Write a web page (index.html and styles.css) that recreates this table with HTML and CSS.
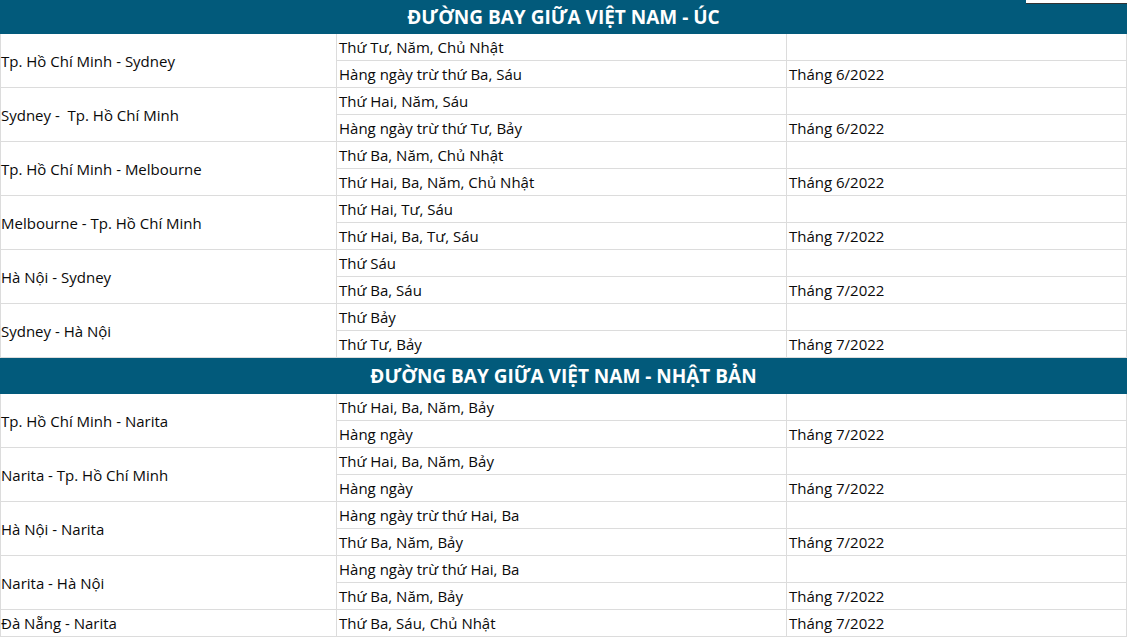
FILE: index.html
```html
<!DOCTYPE html>
<html lang="vi">
<head>
<meta charset="utf-8">
<title>Đường bay</title>
<link rel="stylesheet" href="styles.css">
</head>
<body>
<div class="topbox"></div>
<table class="routes">
  <colgroup>
    <col class="c1"><col class="c2"><col class="c3">
  </colgroup>
  <tbody>
    <tr class="head first"><th colspan="3">ĐƯỜNG BAY GIỮA VIỆT NAM - ÚC</th></tr>
    <tr><td rowspan="2" class="route">Tp. Hồ Chí Minh - Sydney</td><td>Thứ Tư, Năm, Chủ Nhật</td><td></td></tr>
    <tr><td>Hàng ngày trừ thứ Ba, Sáu</td><td>Tháng 6/2022</td></tr>
    <tr><td rowspan="2" class="route">Sydney -&nbsp; Tp. Hồ Chí Minh</td><td>Thứ Hai, Năm, Sáu</td><td></td></tr>
    <tr><td>Hàng ngày trừ thứ Tư, Bảy</td><td>Tháng 6/2022</td></tr>
    <tr><td rowspan="2" class="route">Tp. Hồ Chí Minh - Melbourne</td><td>Thứ Ba, Năm, Chủ Nhật</td><td></td></tr>
    <tr><td>Thứ Hai, Ba, Năm, Chủ Nhật</td><td>Tháng 6/2022</td></tr>
    <tr><td rowspan="2" class="route">Melbourne - Tp. Hồ Chí Minh</td><td>Thứ Hai, Tư, Sáu</td><td></td></tr>
    <tr><td>Thứ Hai, Ba, Tư, Sáu</td><td>Tháng 7/2022</td></tr>
    <tr><td rowspan="2" class="route">Hà Nội - Sydney</td><td>Thứ Sáu</td><td></td></tr>
    <tr><td>Thứ Ba, Sáu</td><td>Tháng 7/2022</td></tr>
    <tr><td rowspan="2" class="route">Sydney - Hà Nội</td><td>Thứ Bảy</td><td></td></tr>
    <tr><td>Thứ Tư, Bảy</td><td>Tháng 7/2022</td></tr>
    <tr class="head"><th colspan="3">ĐƯỜNG BAY GIỮA VIỆT NAM - NHẬT BẢN</th></tr>
    <tr><td rowspan="2" class="route">Tp. Hồ Chí Minh - Narita</td><td>Thứ Hai, Ba, Năm, Bảy</td><td></td></tr>
    <tr><td>Hàng ngày</td><td>Tháng 7/2022</td></tr>
    <tr><td rowspan="2" class="route">Narita - Tp. Hồ Chí Minh</td><td>Thứ Hai, Ba, Năm, Bảy</td><td></td></tr>
    <tr><td>Hàng ngày</td><td>Tháng 7/2022</td></tr>
    <tr><td rowspan="2" class="route">Hà Nội - Narita</td><td>Hàng ngày trừ thứ Hai, Ba</td><td></td></tr>
    <tr><td>Thứ Ba, Năm, Bảy</td><td>Tháng 7/2022</td></tr>
    <tr><td rowspan="2" class="route">Narita - Hà Nội</td><td>Hàng ngày trừ thứ Hai, Ba</td><td></td></tr>
    <tr><td>Thứ Ba, Năm, Bảy</td><td>Tháng 7/2022</td></tr>
    <tr><td class="route">Đà Nẵng - Narita</td><td>Thứ Ba, Sáu, Chủ Nhật</td><td>Tháng 7/2022</td></tr>
  </tbody>
</table>
</body>
</html>
```
FILE: styles.css
```css
html, body {
  margin: 0;
  padding: 0;
  background: #fff;
}
body {
  font-family: "Open Sans", "Noto Sans", sans-serif;
  font-size: 15px;
  color: #0a0a0a;
  position: relative;
}
.topbox {
  position: absolute;
  top: 0;
  right: 0;
  width: 101px;
  height: 3px;
  background: #fff;
  border-bottom: 1px solid #333;
  z-index: 2;
}
.routes {
  border-collapse: collapse;
  table-layout: fixed;
  width: 1126px;
}
.c1 { width: 336px; }
.c2 { width: 450px; }
.c3 { width: 340px; }
.routes td {
  border: 1px solid #dcdcdc;
  height: 26px;
  padding: 0 2px;
  vertical-align: middle;
  line-height: 20px;
  white-space: nowrap;
}
.routes td.route {
  padding-left: 0;
}
.head th {
  background: #025a7b;
  color: #fff;
  font-weight: 700;
  font-size: 19px;
  height: 35px;
  padding: 0;
  border: 1px solid #025a7b;
  text-align: center;
}
.head.first th {
  height: 32px;
}
```
